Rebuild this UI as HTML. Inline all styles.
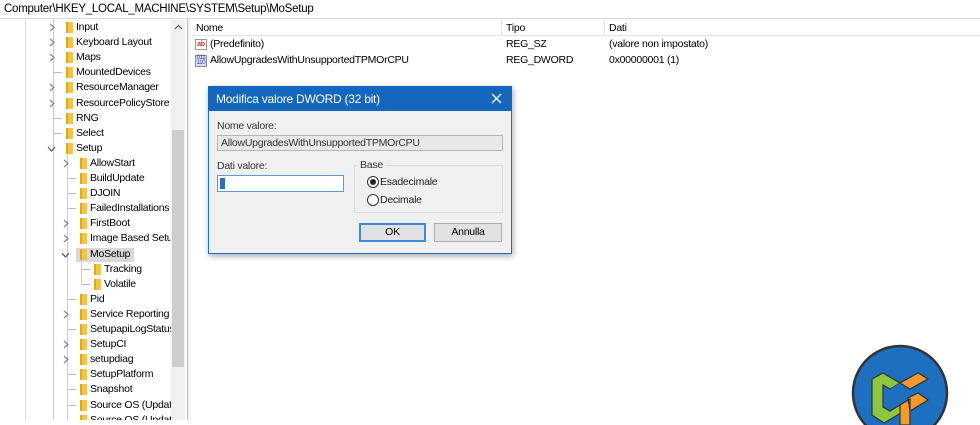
<!DOCTYPE html>
<html><head><style>
*{margin:0;padding:0;box-sizing:border-box}
body{width:980px;height:420px;overflow:hidden;background:#fff;font-family:"Liberation Sans",sans-serif;font-size:10.5px;letter-spacing:-0.25px;color:#000;position:relative}
.a{position:absolute;white-space:nowrap}
.f{position:absolute;width:7px;height:11px;background:#f3c445;border-left:2px solid #e0a820}
</style></head><body>
<div class="a" style="left:0;top:0;width:980px;height:19px;border-bottom:1px solid #d8d8d8;padding:3px 0 0 4px;font-size:11.5px">Computer\HKEY_LOCAL_MACHINE\SYSTEM\Setup\MoSetup</div>
<div class="a" style="left:0;top:0;width:171px;height:420px;overflow:hidden">
<div class="a" style="left:25px;top:19px;width:1px;height:401px;background:#ddd"></div>
<div class="a" style="left:53px;top:19px;width:1px;height:401px;background:#ccc"></div>
<div class="a" style="left:67px;top:150px;width:1px;height:270px;background:#ccc"></div>
<div class="a" style="left:81px;top:258px;width:1px;height:27px;background:#ccc"></div>
<div class="a" style="left:76px;top:248px;width:58px;height:14px;background:#d9d9d9"></div>
<div id="tree"></div>
</div>
<div class="a" style="left:171px;top:20px;width:14px;height:400px;background:#f0f0f0;z-index:5"></div>
<div class="a" style="left:172px;top:130px;width:12px;height:237px;background:#cdcdcd;z-index:6"></div>
<svg class="a" style="left:174px;top:24px;z-index:6" width="9" height="6"><path d="M1 5 L4.5 1.5 L8 5" fill="none" stroke="#555" stroke-width="1.2"/></svg>
<div class="a" style="left:187px;top:19px;width:1px;height:401px;background:#bbb"></div>
<div class="a" style="left:188px;top:19px;width:3px;height:401px;background:#f4f4f4"></div>
<div class="a" style="left:192px;top:20px;width:788px;height:16px;border-bottom:1px solid #e5e5e5"></div>
<div class="a" style="left:501px;top:20px;width:1px;height:16px;background:#e5e5e5"></div>
<div class="a" style="left:604px;top:20px;width:1px;height:16px;background:#e5e5e5"></div>
<div class="a" style="left:196px;top:22px">Nome</div>
<div class="a" style="left:506px;top:22px">Tipo</div>
<div class="a" style="left:609px;top:22px">Dati</div>
<div class="a" style="left:195px;top:39px;width:12px;height:11px;border:1px solid #999;background:#fff;font-size:7px;color:#c33;font-weight:bold;line-height:9px;text-align:center">ab</div>
<div class="a" style="left:210px;top:38px">(Predefinito)</div>
<div class="a" style="left:506px;top:38px">REG_SZ</div>
<div class="a" style="left:609px;top:38px">(valore non impostato)</div>
<div class="a" style="left:195px;top:55px;width:12px;height:12px;border:1px solid #88a;background:#dde;font-size:6px;color:#24a;line-height:5px;text-align:center">011<br>110</div>
<div class="a" style="left:210px;top:54px">AllowUpgradesWithUnsupportedTPMOrCPU</div>
<div class="a" style="left:506px;top:54px">REG_DWORD</div>
<div class="a" style="left:609px;top:54px">0x00000001 (1)</div>

<div class="a" style="left:208px;top:86px;width:304px;height:168px;background:#f0f0f0;border:1px solid #1c6fc4;box-shadow:1px 2px 6px rgba(0,0,0,.35)"></div>
<div class="a" style="left:208px;top:86px;width:304px;height:25px;background:#1467bd"></div>
<div class="a" style="left:216px;top:92px;color:#fff;font-size:12px">Modifica valore DWORD (32 bit)</div>
<svg class="a" style="left:491px;top:93px" width="11" height="11"><path d="M1 1 L10 10 M10 1 L1 10" stroke="#fff" stroke-width="1.3"/></svg>
<div class="a" style="left:217px;top:120px;color:#333">Nome valore:</div>
<div class="a" style="left:217px;top:135px;width:286px;height:16px;background:#e8e8e8;border:1px solid #b5b5b5;padding:1px 0 0 3px;color:#333">AllowUpgradesWithUnsupportedTPMOrCPU</div>
<div class="a" style="left:217px;top:160px;color:#333">Dati valore:</div>
<div class="a" style="left:217px;top:175px;width:127px;height:17px;background:#fff;border:1px solid #5b9bd5"></div>
<div class="a" style="left:220px;top:178px;width:5px;height:11px;background:#2b6cc4"></div>
<div class="a" style="left:354px;top:165px;width:149px;height:48px;border:1px solid #dcdcdc"></div>
<div class="a" style="left:358px;top:159px;background:#f0f0f0;padding:0 2px;color:#333">Base</div>
<div class="a" style="left:367px;top:176px;width:12px;height:12px;border-radius:50%;border:1px solid #333;background:#fff"></div>
<div class="a" style="left:370px;top:179px;width:6px;height:6px;border-radius:50%;background:#222"></div>
<div class="a" style="left:380px;top:176px;color:#222">Esadecimale</div>
<div class="a" style="left:367px;top:194px;width:12px;height:12px;border-radius:50%;border:1px solid #333;background:#fff"></div>
<div class="a" style="left:380px;top:194px;color:#222">Decimale</div>
<div class="a" style="left:359px;top:223px;width:67px;height:19px;background:#e1e1e1;border:2px solid #3c8ad8;text-align:center;line-height:15px">OK</div>
<div class="a" style="left:434px;top:223px;width:68px;height:19px;background:#e1e1e1;border:1px solid #adadad;text-align:center;line-height:17px">Annulla</div>

<svg class="a" style="left:850px;top:335px" width="100" height="90" viewBox="0 0 100 90">
<circle cx="50" cy="58" r="47" fill="#1d70c0" stroke="#333" stroke-width="2.5"/>
<path d="M22 44 L33 38 L50 48 L40 54 L33 50 L33 72 L40 76 L60 64 L66 69 L34 88 L22 80 Z" fill="#8dc63f" stroke="#333" stroke-width="1.2"/>
<path d="M40 54 L50 48 L50 60 Z" fill="#1d70c0"/>
<path d="M50 48 L68 38 L78 44 L60 54 Z M58 63 L68 58 L78 65 L60 76 Z M50 70 L60 64 L60 90 L50 90 Z" fill="#f39a2c" stroke="#333" stroke-width="1.2"/>
</svg>

<script>
var rows=[["Input",0,1],["Keyboard Layout",0,1],["Maps",0,1],["MountedDevices",0,0],["ResourceManager",0,1],["ResourcePolicyStore",0,1],["RNG",0,0],["Select",0,0],["Setup",0,2],["AllowStart",1,1],["BuildUpdate",1,0],["DJOIN",1,0],["FailedInstallations",1,0],["FirstBoot",1,1],["Image Based Setup",1,1],["MoSetup",1,2],["Tracking",2,0],["Volatile",2,0],["Pid",1,0],["Service Reporting",1,1],["SetupapiLogStatus",1,0],["SetupCI",1,1],["setupdiag",1,1],["SetupPlatform",1,0],["Snapshot",1,0],["Source OS (Updates)",1,0],["Source OS (Updates)",1,0]];
var h="";rows.forEach(function(r,i){var y=20+i*15.1,x=66+r[1]*14;
if(r[2]==1)h+='<svg class="a" style="left:'+(x-17)+'px;top:'+(y+3)+'px" width="6" height="9"><path d="M1 1 L5 4.5 L1 8" fill="none" stroke="#888" stroke-width="1.2"/></svg>';
else if(r[2]==2)h+='<svg class="a" style="left:'+(x-19)+'px;top:'+(y+5)+'px" width="9" height="6"><path d="M1 1 L4.5 5 L8 1" fill="none" stroke="#555" stroke-width="1.2"/></svg>';
else h+='<div class="a" style="left:'+(x-12)+'px;top:'+(y+7)+'px;width:8px;height:1px;background:#bbb"></div>';
h+='<div class="f" style="left:'+x+'px;top:'+(y+2)+'px"></div><div class="a" style="left:'+(x+10)+'px;top:'+(y+1)+'px">'+r[0]+'</div>';});
document.getElementById("tree").innerHTML=h;
</script>
</body></html>
